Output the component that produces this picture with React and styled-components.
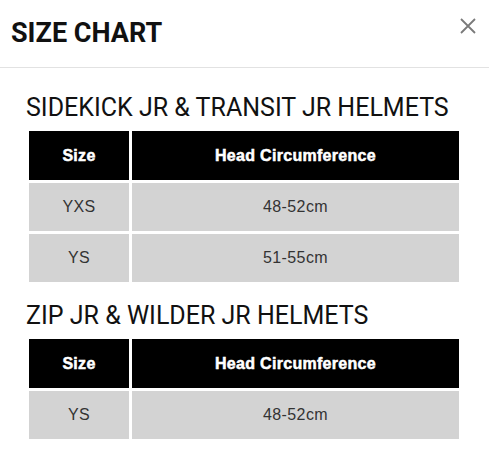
import styled, { createGlobalStyle } from "styled-components";

const GlobalStyle = createGlobalStyle`
  body {
    margin: 0;
    background: #fff;
    font-family: Roboto, "Liberation Sans", Arial, sans-serif;
  }
`;

const Modal = styled.div`
  width: 489px;
  min-height: 457px;
  background: #fff;
`;

const Header = styled.header`
  display: flex;
  justify-content: space-between;
  align-items: flex-start;
  box-sizing: border-box;
  height: 68px;
  padding: 16px 13px 0 11px;
  border-bottom: 1px solid #e2e2e2;
`;

const Title = styled.h1`
  margin: 0;
  font-family: Roboto, "Liberation Sans", sans-serif;
  font-size: 27px;
  line-height: 34px;
  font-weight: 700;
  color: #111;
`;

const CloseButton = styled.button`
  border: 0;
  background: none;
  padding: 0;
  margin-top: 2px;
  width: 16px;
  height: 16px;
  cursor: pointer;
  color: #7a7a7a;

  & svg {
    display: block;
    width: 16px;
    height: 16px;
  }
`;

const Body = styled.div`
  padding: 25px 27px 0 26px;
`;

const Section = styled.section`
  & + & {
    margin-top: 16px;
  }
`;

const SectionTitle = styled.h2`
  margin: 0 0 5px;
  font-family: Roboto, "Liberation Sans", sans-serif;
  font-size: 25px;
  line-height: 30px;
  font-weight: 400;
  color: #111;
`;

const Table = styled.table`
  width: 436px;
  border-collapse: separate;
  border-spacing: 3px;
  table-layout: fixed;
  font-family: "Liberation Sans", Arial, sans-serif;
`;

const Th = styled.th`
  background: #000;
  color: #fff;
  height: 49px;
  padding: 0;
  font-size: 16px;
  font-weight: 700;
  letter-spacing: 0.3px;
  -webkit-text-stroke: 0.5px #fff;
  text-align: center;
  width: ${({ $w }) => ($w ? `${$w}px` : "auto")};
`;

const Td = styled.td`
  background: #d3d3d3;
  color: #333;
  height: 48px;
  padding: 0;
  font-size: 16px;
  letter-spacing: 0.4px;
  text-align: center;
`;

const CHARTS = [
  {
    title: "SIDEKICK JR & TRANSIT JR HELMETS",
    rows: [
      ["YXS", "48-52cm"],
      ["YS", "51-55cm"],
    ],
  },
  {
    title: "ZIP JR & WILDER JR HELMETS",
    rows: [["YS", "48-52cm"]],
  },
];

function App() {
  return (
    <>
      <GlobalStyle />
      <Modal>
        <Header>
          <Title>SIZE CHART</Title>
          <CloseButton aria-label="Close">
            <svg viewBox="0 0 16 16" fill="none" stroke="currentColor" strokeWidth="1.8">
              <path d="M1 1l14 14M15 1L1 15" />
            </svg>
          </CloseButton>
        </Header>
        <Body>
          {CHARTS.map((chart) => (
            <Section key={chart.title}>
              <SectionTitle>{chart.title}</SectionTitle>
              <Table>
                <thead>
                  <tr>
                    <Th $w={100}>Size</Th>
                    <Th>Head Circumference</Th>
                  </tr>
                </thead>
                <tbody>
                  {chart.rows.map(([size, circ]) => (
                    <tr key={size + circ}>
                      <Td>{size}</Td>
                      <Td>{circ}</Td>
                    </tr>
                  ))}
                </tbody>
              </Table>
            </Section>
          ))}
        </Body>
      </Modal>
    </>
  );
}

export default App;
